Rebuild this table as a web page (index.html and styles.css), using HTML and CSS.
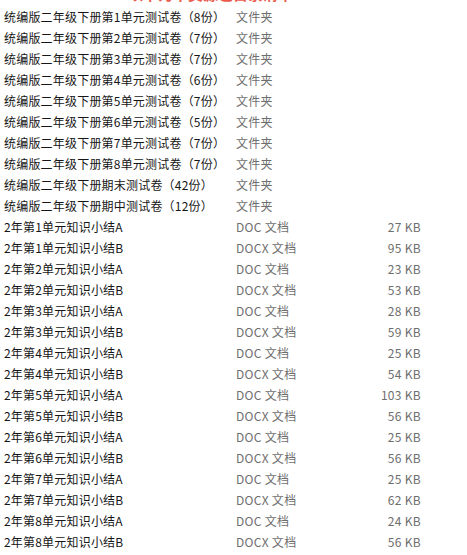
FILE: index.html
```html
<!DOCTYPE html>
<html lang="zh">
<head>
<meta charset="utf-8">
<link rel="stylesheet" href="styles.css">
</head>
<body>
<div class="banner"><span class="banner-text">以下为本资源包目录清单</span></div>
<div class="list">
  <div class="row"><span class="name">统编版二年级下册第1单元测试卷（8份）</span><span class="type">文件夹</span><span class="size"></span></div>
  <div class="row"><span class="name">统编版二年级下册第2单元测试卷（7份）</span><span class="type">文件夹</span><span class="size"></span></div>
  <div class="row"><span class="name">统编版二年级下册第3单元测试卷（7份）</span><span class="type">文件夹</span><span class="size"></span></div>
  <div class="row"><span class="name">统编版二年级下册第4单元测试卷（6份）</span><span class="type">文件夹</span><span class="size"></span></div>
  <div class="row"><span class="name">统编版二年级下册第5单元测试卷（7份）</span><span class="type">文件夹</span><span class="size"></span></div>
  <div class="row"><span class="name">统编版二年级下册第6单元测试卷（5份）</span><span class="type">文件夹</span><span class="size"></span></div>
  <div class="row"><span class="name">统编版二年级下册第7单元测试卷（7份）</span><span class="type">文件夹</span><span class="size"></span></div>
  <div class="row"><span class="name">统编版二年级下册第8单元测试卷（7份）</span><span class="type">文件夹</span><span class="size"></span></div>
  <div class="row"><span class="name">统编版二年级下册期末测试卷（42份）</span><span class="type">文件夹</span><span class="size"></span></div>
  <div class="row"><span class="name">统编版二年级下册期中测试卷（12份）</span><span class="type">文件夹</span><span class="size"></span></div>
  <div class="row"><span class="name">2年第1单元知识小结A</span><span class="type">DOC 文档</span><span class="size">27 KB</span></div>
  <div class="row"><span class="name">2年第1单元知识小结B</span><span class="type">DOCX 文档</span><span class="size">95 KB</span></div>
  <div class="row"><span class="name">2年第2单元知识小结A</span><span class="type">DOC 文档</span><span class="size">23 KB</span></div>
  <div class="row"><span class="name">2年第2单元知识小结B</span><span class="type">DOCX 文档</span><span class="size">53 KB</span></div>
  <div class="row"><span class="name">2年第3单元知识小结A</span><span class="type">DOC 文档</span><span class="size">28 KB</span></div>
  <div class="row"><span class="name">2年第3单元知识小结B</span><span class="type">DOCX 文档</span><span class="size">59 KB</span></div>
  <div class="row"><span class="name">2年第4单元知识小结A</span><span class="type">DOC 文档</span><span class="size">25 KB</span></div>
  <div class="row"><span class="name">2年第4单元知识小结B</span><span class="type">DOCX 文档</span><span class="size">54 KB</span></div>
  <div class="row"><span class="name">2年第5单元知识小结A</span><span class="type">DOC 文档</span><span class="size">103 KB</span></div>
  <div class="row"><span class="name">2年第5单元知识小结B</span><span class="type">DOCX 文档</span><span class="size">56 KB</span></div>
  <div class="row"><span class="name">2年第6单元知识小结A</span><span class="type">DOC 文档</span><span class="size">25 KB</span></div>
  <div class="row"><span class="name">2年第6单元知识小结B</span><span class="type">DOCX 文档</span><span class="size">56 KB</span></div>
  <div class="row"><span class="name">2年第7单元知识小结A</span><span class="type">DOC 文档</span><span class="size">25 KB</span></div>
  <div class="row"><span class="name">2年第7单元知识小结B</span><span class="type">DOCX 文档</span><span class="size">62 KB</span></div>
  <div class="row"><span class="name">2年第8单元知识小结A</span><span class="type">DOC 文档</span><span class="size">24 KB</span></div>
  <div class="row"><span class="name">2年第8单元知识小结B</span><span class="type">DOCX 文档</span><span class="size">56 KB</span></div>
</div>
</body>
</html>
```

FILE: styles.css
```css
html, body {
  margin: 0;
  padding: 0;
  background: #ffffff;
}
body {
  font-family: "Noto Sans CJK SC", "Noto Sans", sans-serif;
  font-size: 12px;
  color: #1a1a1a;
}
.banner {
  height: 6px;
  overflow: hidden;
  padding-left: 128px;
}
.banner-text {
  display: block;
  margin-top: -14px;
  line-height: 16px;
  font-size: 15px;
  font-weight: bold;
  color: #ea5a4c;
}
.list {
  padding-left: 4px;
}
.row {
  display: grid;
  grid-template-columns: 232px 120px 65px;
  height: 21px;
  line-height: 21px;
  white-space: nowrap;
}
.name {
  color: #161616;
  letter-spacing: 0.2px;
}
.type {
  color: #6e6e6e;
  letter-spacing: 0.3px;
}
.size {
  color: #6e6e6e;
  text-align: right;
  letter-spacing: 0.3px;
}
```
